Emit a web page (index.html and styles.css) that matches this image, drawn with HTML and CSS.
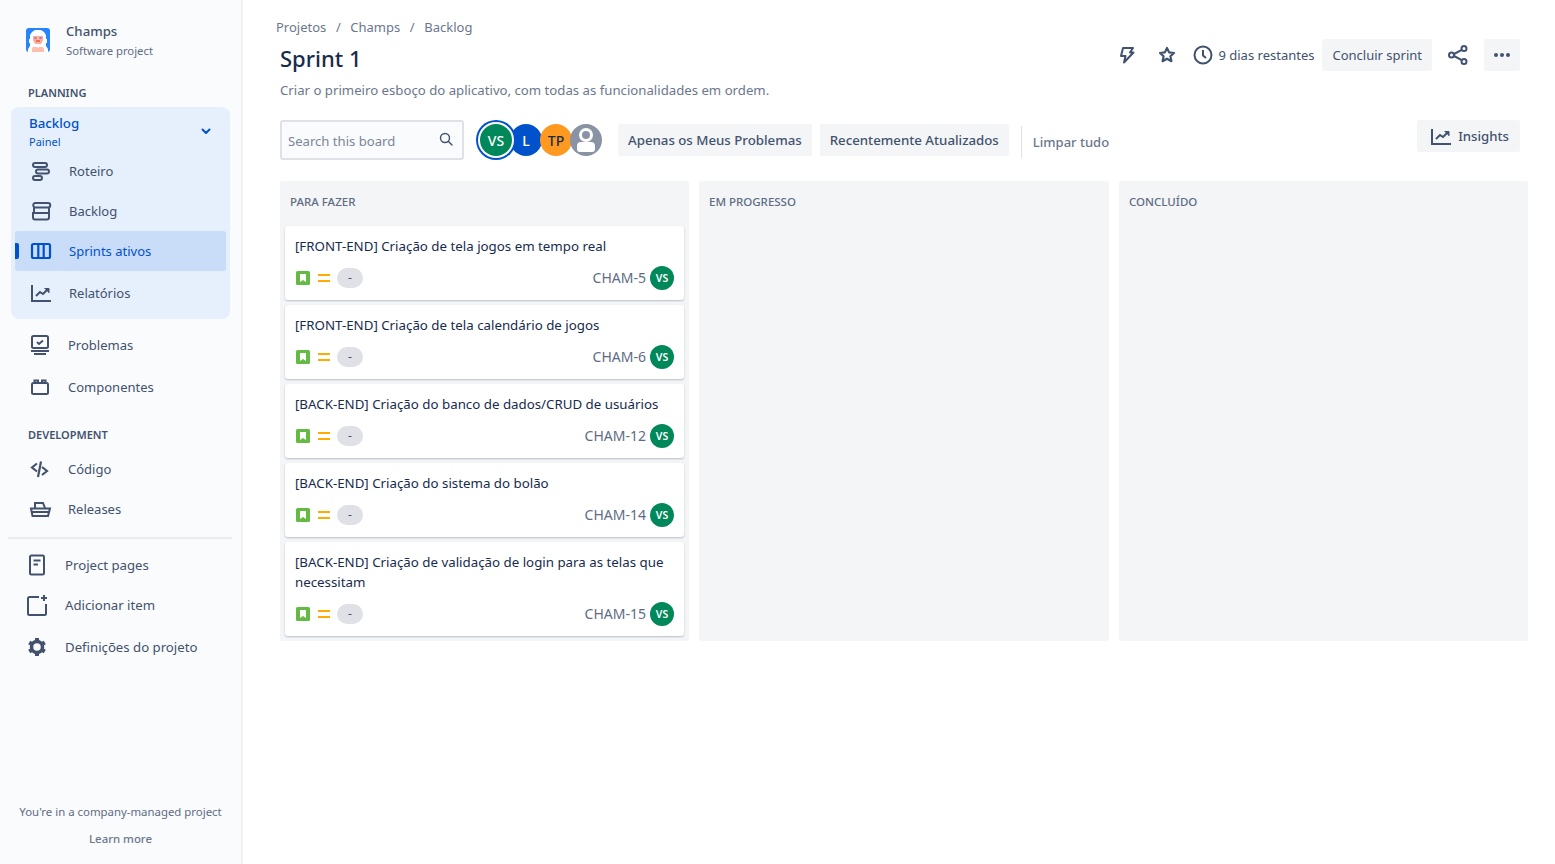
FILE: index.html
```html
<!doctype html>
<html lang="pt">
<head>
    <meta charset="UTF-8">
    <title>Sprint 1</title>
    <link rel="stylesheet" href="styles.css">
</head>
<body>
<div class="page">
    <aside class="sidebar">
        <div class="project">
            <svg class="logo" viewBox="0 0 24 24">
                <rect width="24" height="24" rx="3" fill="#2684ff"/>
                <path d="M2 24v-3l2-3v-3H3v-4h1V7l2-3 3-2h6l3 2 2 3v4h1v4h-1v3l2 3v3z" fill="#fff"/>
                <path d="M7 8h10v5h-1v2h-1v1H9v-1H8v-2H7z" fill="#ffad9e"/>
                <path d="M8.500 9.500h2v1h-2zM13.500 9.500h2v1h-2z" fill="#5e4db2"/>
                <path d="M10 12.500h4v1h-4z" fill="#de350b"/>
                <path d="M6 24v-3l1-2h4l1 1 1-1h4l1 2v3z" fill="#ffbdad"/>
            </svg>
            <div>
                <div class="project-name">Champs</div>
                <div class="project-type">Software project</div>
            </div>
        </div>

        <div class="nav-title planning">PLANNING</div>
        <div class="nav-group">
            <div class="group-head">
                <div>
                    <div class="group-name">Backlog</div>
                    <div class="group-sub">Painel</div>
                </div>
                <svg class="chevron" viewBox="0 0 10 8"><path d="M1.500 1.500 5 5l3.500-3.500" fill="none" stroke="#0052cc" stroke-width="2" stroke-linecap="round" stroke-linejoin="round"/></svg>
            </div>
            <a class="nav-item">
                <svg class="nav-icon" viewBox="0 0 24 24" fill="none" stroke="#42526e" stroke-width="2"><rect x="4" y="4" width="14" height="4" rx="2"/><rect x="7" y="10.500" width="13" height="4" rx="2"/><rect x="4" y="17" width="9" height="4" rx="2"/></svg>
                Roteiro
            </a>
            <a class="nav-item">
                <svg class="nav-icon" viewBox="0 0 24 24" fill="none" stroke="#42526e" stroke-width="2"><path d="M6 4h13a2 2 0 0 1 0 4.500H6a2.300 2.300 0 0 1 0-4.500zM5 8.500h15v5.500H5zM4 14h16v4.500a2 2 0 0 1-2 2H6a2 2 0 0 1-2-2z"/></svg>
                Backlog
            </a>
            <a class="nav-item active">
                <svg class="nav-icon" viewBox="0 0 24 24" fill="none" stroke="#0052cc" stroke-width="2.200"><rect x="3" y="5" width="18" height="14" rx="1.500"/><path d="M9.300 5v14M14.700 5v14"/></svg>
                Sprints ativos
            </a>
            <a class="nav-item reports">
                <svg class="nav-icon" viewBox="0 0 24 24" fill="none" stroke="#42526e" stroke-width="2"><path d="M3 4v16h19"/><path d="M7 15l4-4 3 2 5-5"/><path d="M15.500 7.500H20V12" fill="#42526e" stroke-width="1"/></svg>
                Relatórios
            </a>
        </div>

        <a class="nav-item plain roomy">
            <svg class="nav-icon" viewBox="0 0 24 24" fill="none" stroke="#42526e" stroke-width="2"><rect x="4" y="3" width="16" height="12" rx="1.500"/><path d="M9 9l2 2 4-3.500"/><path d="M3 18h18M6 21h12"/></svg>
            Problemas
        </a>
        <a class="nav-item plain">
            <svg class="nav-icon" viewBox="0 0 24 24" fill="none" stroke="#42526e" stroke-width="2"><rect x="4" y="8" width="16" height="11" rx="1.500"/><path d="M6.500 8V5.500h3.500V8M14 8V5.500h3.500V8"/></svg>
            Componentes
        </a>

        <div class="nav-title development">DEVELOPMENT</div>
        <a class="nav-item plain">
            <svg class="nav-icon" viewBox="0 0 24 24" fill="none" stroke="#42526e" stroke-width="2.200"><path d="M9 6.500l-5 4 5 4M14 10l5 4-5 4M13 4.500 10 20"/></svg>
            Código
        </a>
        <a class="nav-item plain">
            <svg class="nav-icon" viewBox="0 0 24 24" fill="none" stroke="#42526e" stroke-width="2"><path d="M7 11V6h8l2 5"/><path d="M3 11.500h19l-2 7.500H4.500z"/><path d="M3 15h18"/></svg>
            Releases
        </a>

        <hr class="nav-line">

        <a class="nav-item extra">
            <svg class="nav-icon" viewBox="0 0 24 24" fill="none" stroke="#42526e" stroke-width="2"><rect x="5" y="2.500" width="14" height="19" rx="1.500"/><path d="M8.500 7.500h7M8.500 11.500h4.500"/></svg>
            Project pages
        </a>
        <a class="nav-item extra">
            <svg class="nav-icon" viewBox="0 0 24 24" fill="none" stroke="#42526e" stroke-width="2"><path d="M14 4H4.500A1.500 1.500 0 0 0 3 5.500v15A1.500 1.500 0 0 0 4.500 22h15a1.500 1.500 0 0 0 1.500-1.500V11"/><path d="M19 2v6M16 5h6"/></svg>
            Adicionar item
        </a>
        <a class="nav-item extra">
            <svg class="nav-icon" viewBox="0 0 24 24" fill="none" stroke="#42526e" stroke-width="3.500"><circle cx="12" cy="12" r="5.500"/><path d="M12 3v3M12 18v3M4.200 7.500l2.600 1.500M17.200 15l2.600 1.500M4.200 16.500 6.800 15M17.200 9l2.600-1.500" stroke-width="4"/></svg>
            Definições do projeto
        </a>

        <div class="side-foot">
            <div>You're in a company-managed project</div>
            <div class="learn">Learn more</div>
        </div>
    </aside>

    <main class="content">
        <div class="crumbs"><span>Projetos</span><i>/</i><span>Champs</span><i>/</i><span>Backlog</span></div>

        <div class="title-row">
            <h1>Sprint 1</h1>
            <div class="actions">
                <svg class="act-icon bolt" viewBox="0 0 24 24" fill="none" stroke="#42526e" stroke-width="2" stroke-linejoin="round"><path d="M8 5h10l-3 4.500h3.500L9 19.500l1.500-6.500H6z"/></svg>
                <svg class="act-icon star" viewBox="0 0 24 24" fill="none" stroke="#42526e" stroke-width="2.200" stroke-linejoin="round"><path d="M12 5l2.100 4.400 4.900.6-3.600 3.300 1 4.900-4.400-2.500-4.400 2.500 1-4.900L5 10l4.900-.6z"/></svg>
                <svg class="act-icon clock" viewBox="0 0 24 24" fill="none" stroke="#42526e" stroke-width="2"><circle cx="12" cy="12" r="8.500"/><path d="M12 7v5.500l3 2.500"/></svg>
                <span class="days">9 dias restantes</span>
                <button class="btn finish">Concluir sprint</button>
                <svg class="act-icon share" viewBox="0 0 24 24" fill="none" stroke="#42526e" stroke-width="2"><circle cx="18" cy="5.500" r="2.500"/><circle cx="5.500" cy="12" r="2.500"/><circle cx="18" cy="18.500" r="2.500"/><path d="M8 11l7.800-4.200M8 13l7.800 4.200"/></svg>
                <button class="btn more"><b></b><b></b><b></b></button>
            </div>
        </div>

        <p class="descr">Criar o primeiro esboço do aplicativo, com todas as funcionalidades em ordem.</p>

        <div class="toolbar">
            <div class="search">
                <span>Search this board</span>
                <svg viewBox="0 0 16 16" fill="none" stroke="#42526e" stroke-width="1.400"><circle cx="7" cy="7" r="4.500"/><path d="M10.500 10.500 14 14" stroke-linecap="round"/></svg>
            </div>
            <div class="avatars">
                <div class="avatar vs">VS</div>
                <div class="avatar blue">L</div>
                <div class="avatar orange">TP</div>
                <div class="avatar grey">
                    <svg viewBox="0 0 32 32"><circle cx="16" cy="11" r="5.500" fill="none" stroke="#fff" stroke-width="3"/><path d="M7 22a4 4 0 0 1 4-4h10a4 4 0 0 1 4 4v3a3 3 0 0 1-3 3H10a3 3 0 0 1-3-3z" fill="#fff"/></svg>
                </div>
            </div>
            <button class="btn filter">Apenas os Meus Problemas</button>
            <button class="btn filter">Recentemente Atualizados</button>
            <div class="clear">Limpar tudo</div>
            <button class="btn insights">
                <svg viewBox="0 0 24 24" fill="none" stroke="#42526e" stroke-width="2"><path d="M3 5v15h19"/><path d="M7 15l4-4 3 2 5-5"/><path d="M15.500 7.500H20V12" fill="#42526e" stroke-width="1"/></svg>
                Insights
            </button>
        </div>

        <div class="board">
            <section class="column">
                <h2>PARA FAZER</h2>
                <article class="card">
                    <div class="card-title">[FRONT-END] Criação de tela jogos em tempo real</div>
                    <div class="card-foot">
                        <svg class="story" viewBox="0 0 14 14"><rect width="14" height="14" rx="1.500" fill="#65ba43"/><path d="M4 3h6v8L7 9l-3 2z" fill="#fff"/></svg>
                        <span class="prio"></span>
                        <span class="pill">-</span>
                        <span class="key">CHAM-5</span>
                        <span class="mini">VS</span>
                    </div>
                </article>
                <article class="card">
                    <div class="card-title">[FRONT-END] Criação de tela calendário de jogos</div>
                    <div class="card-foot">
                        <svg class="story" viewBox="0 0 14 14"><rect width="14" height="14" rx="1.500" fill="#65ba43"/><path d="M4 3h6v8L7 9l-3 2z" fill="#fff"/></svg>
                        <span class="prio"></span>
                        <span class="pill">-</span>
                        <span class="key">CHAM-6</span>
                        <span class="mini">VS</span>
                    </div>
                </article>
                <article class="card">
                    <div class="card-title">[BACK-END] Criação do banco de dados/CRUD de usuários</div>
                    <div class="card-foot">
                        <svg class="story" viewBox="0 0 14 14"><rect width="14" height="14" rx="1.500" fill="#65ba43"/><path d="M4 3h6v8L7 9l-3 2z" fill="#fff"/></svg>
                        <span class="prio"></span>
                        <span class="pill">-</span>
                        <span class="key">CHAM-12</span>
                        <span class="mini">VS</span>
                    </div>
                </article>
                <article class="card">
                    <div class="card-title">[BACK-END] Criação do sistema do bolão</div>
                    <div class="card-foot">
                        <svg class="story" viewBox="0 0 14 14"><rect width="14" height="14" rx="1.500" fill="#65ba43"/><path d="M4 3h6v8L7 9l-3 2z" fill="#fff"/></svg>
                        <span class="prio"></span>
                        <span class="pill">-</span>
                        <span class="key">CHAM-14</span>
                        <span class="mini">VS</span>
                    </div>
                </article>
                <article class="card">
                    <div class="card-title">[BACK-END] Criação de validação de login para as telas que necessitam</div>
                    <div class="card-foot">
                        <svg class="story" viewBox="0 0 14 14"><rect width="14" height="14" rx="1.500" fill="#65ba43"/><path d="M4 3h6v8L7 9l-3 2z" fill="#fff"/></svg>
                        <span class="prio"></span>
                        <span class="pill">-</span>
                        <span class="key">CHAM-15</span>
                        <span class="mini">VS</span>
                    </div>
                </article>
            </section>
            <section class="column"><h2>EM PROGRESSO</h2></section>
            <section class="column"><h2>CONCLUÍDO</h2></section>
        </div>
    </main>
</div>
</body>
</html>
```

FILE: styles.css
```css
* {
    box-sizing: border-box;
}
body {
    margin: 0;
    background: #fff;
    color: #42526e;
    font-family: "Noto Sans", "Open Sans", sans-serif;
    font-size: 13px;
    overflow: hidden;
}
.page {
    display: flex;
    height: 864px;
}

/* sidebar */
.sidebar {
    display: flex;
    flex-direction: column;
    flex: none;
    width: 243px;
    padding: 0 11px 0 8px;
    background: #fafbfc;
    border-right: 2px solid #f0f1f4;
}
.project {
    display: flex;
    align-items: center;
    gap: 16px;
    height: 41px;
    margin-top: 20px;
    padding-left: 18px;
}
.logo {
    width: 24px;
    height: 24px;
    margin-bottom: 2px;
}
.project-name {
    font-size: 13.200px;
    font-weight: 500;
    line-height: 20px;
}
.project-type {
    font-size: 11.300px;
    line-height: 20px;
    color: #5e6c84;
}
.nav-title {
    padding-left: 20px;
    font-size: 11px;
    font-weight: 600;
    line-height: 16px;
}
.planning {
    margin-top: 24px;
}
.development {
    margin-top: 20px;
    margin-bottom: 6px;
}
.nav-group {
    width: 219px;
    height: 212px;
    margin: 6px 0 6px 3px;
    padding: 4px;
    background: #e6effc;
    border-radius: 8px;
}
.group-head {
    display: flex;
    align-items: center;
    justify-content: space-between;
    height: 40px;
    padding: 0 15px 2px 14px;
    color: #0052cc;
}
.group-name {
    font-size: 13.300px;
    font-weight: 500;
    line-height: 24px;
}
.group-sub {
    font-size: 11px;
    line-height: 14px;
}
.chevron {
    width: 10px;
    height: 8px;
    margin-top: 3px;
}
.nav-item {
    display: flex;
    align-items: center;
    gap: 16px;
    height: 40px;
    padding-left: 14px;
    font-size: 13px;
    border-radius: 3px;
}
.nav-icon {
    flex: none;
    width: 24px;
    height: 24px;
}
.nav-item.active {
    position: relative;
    background: #c9dcf8;
    color: #0052cc;
}
.nav-item.active::before {
    content: "";
    position: absolute;
    left: 0;
    top: 12px;
    width: 4px;
    height: 16px;
    background: #0052cc;
    border-radius: 0 2px 2px 0;
}
.nav-item.reports {
    margin-top: 2px;
}
.nav-item.plain {
    padding-left: 20px;
}
.nav-item.roomy {
    margin-bottom: 2px;
}
.nav-line {
    width: 224px;
    height: 2px;
    margin: 8px 0 6px;
    border: none;
    background: #ebecf0;
}
.nav-item.extra {
    padding-left: 17px;
    font-size: 13.200px;
}
.nav-item.extra:last-of-type {
    margin-top: 2px;
}
.side-foot {
    margin-top: auto;
    padding-bottom: 17px;
    padding-left: 3px;
    font-size: 11.400px;
    line-height: 16px;
    text-align: center;
    color: #5e6c84;
}
.learn {
    margin-top: 11px;
    font-weight: 500;
    color: #6b778c;
}

/* main */
.content {
    flex: 1;
    min-width: 0;
    padding: 17px 27px 0 37px;
}
.crumbs {
    display: flex;
    margin-left: -4px;
    font-size: 13px;
    line-height: 20px;
    color: #6b778c;
}
.crumbs i {
    width: 24px;
    font-style: normal;
    text-align: center;
}
.title-row {
    display: flex;
    align-items: flex-start;
    justify-content: space-between;
    height: 32px;
    margin-top: 6px;
    padding-right: 8px;
}
h1 {
    margin: -1px 0 0;
    font-size: 22px;
    font-weight: 500;
    line-height: 32px;
    color: #172b4d;
}
.actions {
    display: flex;
    align-items: center;
    margin-top: -4px;
}
.act-icon {
    width: 24px;
    height: 24px;
}
.star {
    margin-left: 16px;
}
.clock {
    margin-left: 12px;
    margin-right: 3px;
}
.days {
    font-size: 13px;
    margin-right: 8px;
}
.btn {
    height: 32px;
    padding: 0 10px;
    border: none;
    border-radius: 3px;
    background: #f4f5f7;
    color: #42526e;
    font-family: inherit;
    font-size: 13px;
}
.share {
    margin-left: 14px;
    margin-right: 14px;
}
.more {
    display: flex;
    align-items: center;
    justify-content: center;
    gap: 2px;
    width: 36px;
    padding: 0;
}
.more b {
    width: 4px;
    height: 4px;
    border-radius: 50%;
    background: #42526e;
}
.descr {
    margin: 5px 0 0;
    font-size: 13.200px;
    line-height: 20px;
    color: #6b778c;
}
.toolbar {
    display: flex;
    align-items: flex-start;
    height: 40px;
    margin-top: 20px;
    padding-right: 8px;
}
.search {
    display: flex;
    align-items: center;
    justify-content: space-between;
    width: 184px;
    height: 40px;
    padding: 0 8px 0 6px;
    border: 2px solid #dfe1e6;
    border-radius: 3px;
    background: #fafbfc;
    font-size: 13.100px;
    color: #7a869a;
}
.search span {
    margin-top: 2px;
}
.search svg {
    width: 16px;
    height: 16px;
    margin-bottom: 2px;
}
.avatars {
    display: flex;
    align-items: center;
    height: 40px;
    margin-left: 16px;
}
.avatar {
    display: flex;
    align-items: center;
    justify-content: center;
    width: 32px;
    height: 32px;
    margin-right: -2px;
    border-radius: 50%;
    font-size: 14px;
    font-weight: 500;
    color: #fff;
}
.avatar.vs {
    z-index: 1;
    background: #00875a;
    box-shadow: 0 0 0 2px #fff, 0 0 0 4px #0052cc;
}
.avatar.blue {
    background: #0052cc;
}
.avatar.orange {
    background: #ff991f;
    color: #172b4d;
}
.avatar.grey {
    background: #8993a4;
    overflow: hidden;
}
.avatar.grey svg {
    width: 32px;
    height: 32px;
}
.filter {
    margin-top: 4px;
    font-size: 13.250px;
    font-weight: 500;
}
.avatars + .filter {
    margin-left: 18px;
}
.filter + .filter {
    margin-left: 8px;
}
.clear {
    height: 32px;
    margin: 6px 0 0 12px;
    padding-left: 11px;
    border-left: 1px solid #dfe1e6;
    font-size: 13px;
    font-weight: 500;
    line-height: 32px;
    color: #6b778c;
}
.insights {
    display: flex;
    align-items: center;
    gap: 5px;
    margin-left: auto;
    padding: 0 11px 0 12px;
    font-size: 13.200px;
    font-weight: 500;
}
.insights svg {
    width: 24px;
    height: 24px;
}
.board {
    display: grid;
    grid-template-columns: 409px 410px 409px;
    gap: 10px;
    margin-top: 21px;
    align-items: stretch;
}
.column {
    min-height: 460px;
    padding: 0 5px;
    border-radius: 3px;
    background: #f4f5f7;
}
h2 {
    height: 45px;
    margin: 0;
    padding: 12px 5px 0;
    font-size: 11.500px;
    font-weight: 500;
    line-height: 18px;
    color: #5e6c84;
}
.card {
    margin-bottom: 5px;
    padding: 10px;
    border-radius: 3px;
    background: #fff;
    box-shadow: 0 1px 2px rgba(9, 30, 66, 0.25);
}
.card-title {
    font-size: 13.300px;
    line-height: 20px;
    color: #172b4d;
}
.card-foot {
    display: flex;
    align-items: center;
    height: 24px;
    margin-top: 10px;
}
.story {
    flex: none;
    width: 14px;
    height: 14px;
    margin-left: 1px;
}
.prio {
    flex: none;
    width: 12px;
    height: 8px;
    margin-left: 8px;
    border-top: 2px solid #ffab00;
    border-bottom: 2px solid #ffab00;
}
.pill {
    width: 26px;
    height: 20px;
    margin-left: 7px;
    border-radius: 10px;
    background: #dfe1e6;
    font-size: 12px;
    line-height: 20px;
    text-align: center;
}
.key {
    margin-left: auto;
    margin-bottom: 2px;
    font-size: 14px;
    color: #5e6c84;
}
.mini {
    width: 24px;
    height: 24px;
    margin-left: 4px;
    border-radius: 50%;
    background: #00875a;
    color: #fff;
    font-size: 10.500px;
    font-weight: 600;
    line-height: 24px;
    text-align: center;
}
```
